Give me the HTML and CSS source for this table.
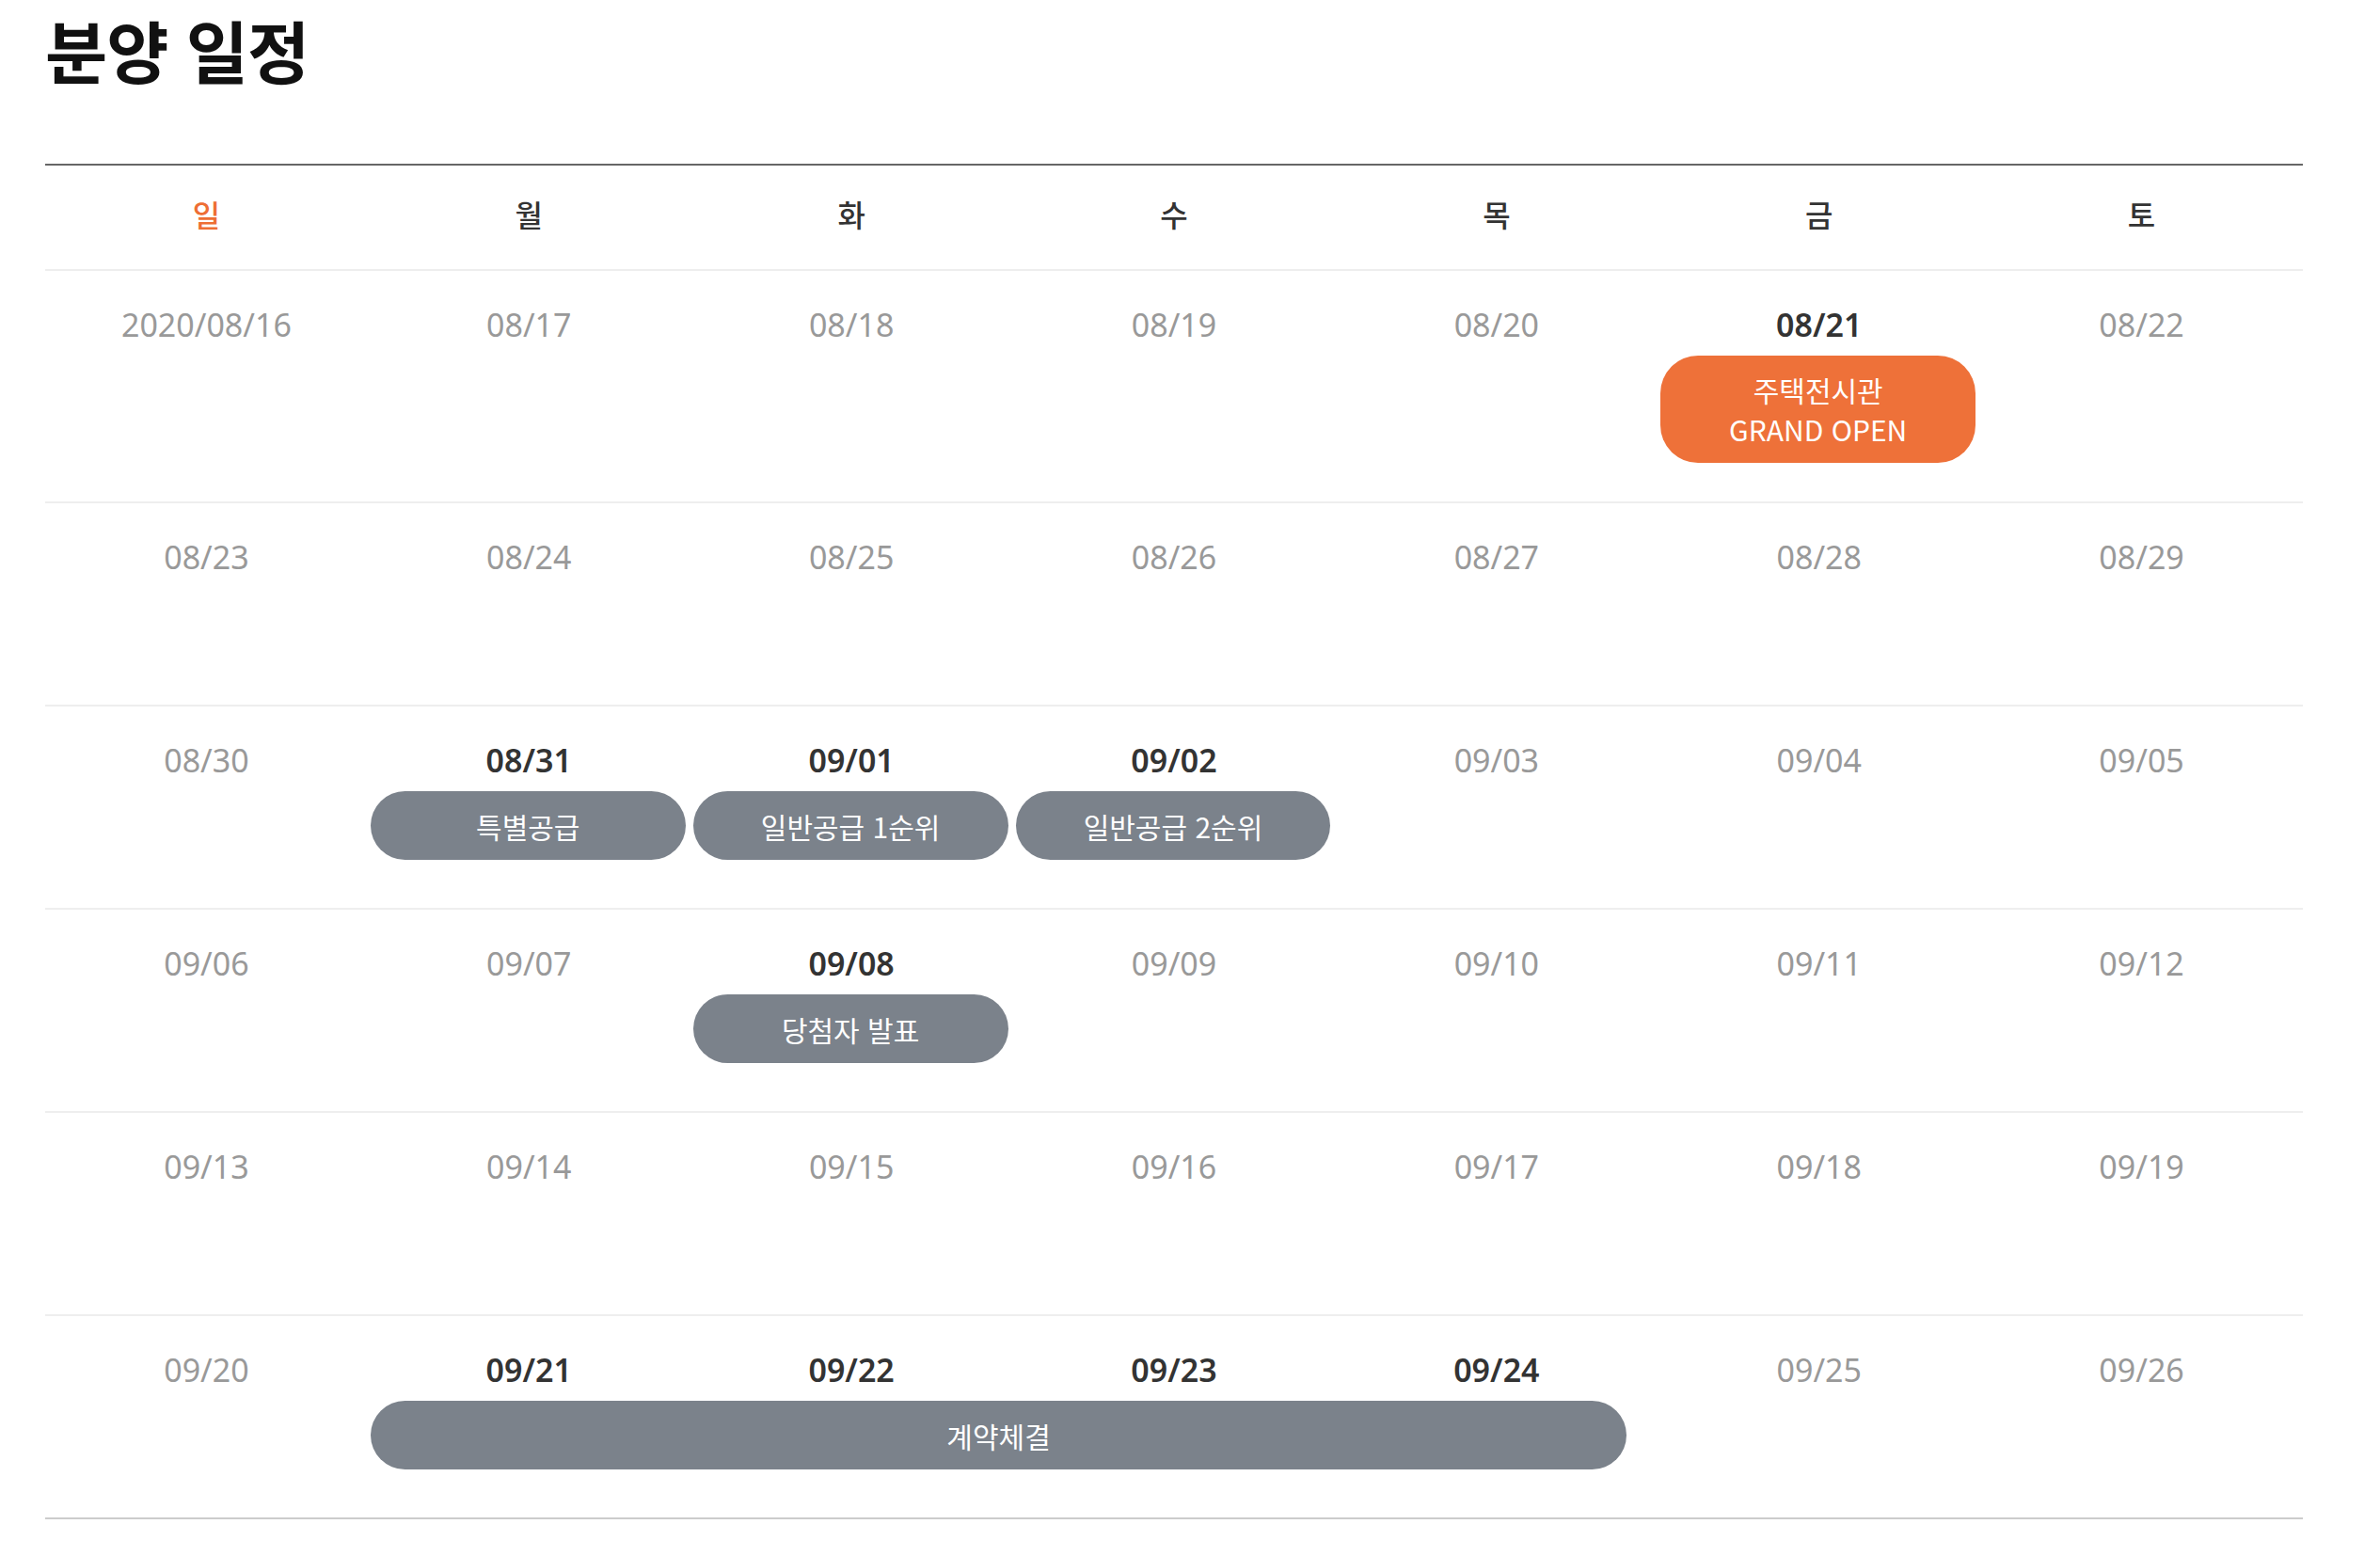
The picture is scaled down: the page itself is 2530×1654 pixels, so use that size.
FILE: index.html
```html
<!DOCTYPE html>
<html lang="ko">
<head>
<meta charset="utf-8">
<title>분양 일정</title>
<link rel="stylesheet" href="styles.css">
</head>
<body>
<main class="page">
  <h1 class="title">분양 일정</h1>
  <section class="calendar">
    <div class="week-head">
      <div class="dow sun">일</div>
      <div class="dow">월</div>
      <div class="dow">화</div>
      <div class="dow">수</div>
      <div class="dow">목</div>
      <div class="dow">금</div>
      <div class="dow">토</div>
    </div>

    <div class="week">
      <div class="date">2020/08/16</div>
      <div class="date">08/17</div>
      <div class="date">08/18</div>
      <div class="date">08/19</div>
      <div class="date">08/20</div>
      <div class="date on">08/21</div>
      <div class="date">08/22</div>
      <div class="event orange c6"><span>주택전시관</span><span>GRAND OPEN</span></div>
    </div>

    <div class="week">
      <div class="date">08/23</div>
      <div class="date">08/24</div>
      <div class="date">08/25</div>
      <div class="date">08/26</div>
      <div class="date">08/27</div>
      <div class="date">08/28</div>
      <div class="date">08/29</div>
    </div>

    <div class="week">
      <div class="date">08/30</div>
      <div class="date on">08/31</div>
      <div class="date on">09/01</div>
      <div class="date on">09/02</div>
      <div class="date">09/03</div>
      <div class="date">09/04</div>
      <div class="date">09/05</div>
      <div class="event c2">특별공급</div>
      <div class="event c3">일반공급 1순위</div>
      <div class="event c4">일반공급 2순위</div>
    </div>

    <div class="week">
      <div class="date">09/06</div>
      <div class="date">09/07</div>
      <div class="date on">09/08</div>
      <div class="date">09/09</div>
      <div class="date">09/10</div>
      <div class="date">09/11</div>
      <div class="date">09/12</div>
      <div class="event c3">당첨자 발표</div>
    </div>

    <div class="week">
      <div class="date">09/13</div>
      <div class="date">09/14</div>
      <div class="date">09/15</div>
      <div class="date">09/16</div>
      <div class="date">09/17</div>
      <div class="date">09/18</div>
      <div class="date">09/19</div>
    </div>

    <div class="week last">
      <div class="date">09/20</div>
      <div class="date on">09/21</div>
      <div class="date on">09/22</div>
      <div class="date on">09/23</div>
      <div class="date on">09/24</div>
      <div class="date">09/25</div>
      <div class="date">09/26</div>
      <div class="event c2 span4">계약체결</div>
    </div>
  </section>
</main>
</body>
</html>
```

FILE: styles.css
```css
html, body {
  margin: 0;
  padding: 0;
  background: #fff;
}

body {
  font-family: "Noto Sans CJK KR", "Noto Sans", sans-serif;
  color: #333;
}

.page {
  width: 2400px;
  margin-left: 48px;
}

.title {
  margin: 16px 0 0;
  font-size: 72px;
  line-height: 72px;
  font-weight: 700;
  color: #111;
  letter-spacing: -1px;
}

.calendar {
  margin-top: 86px;
  border-top: 2px solid #666;
}

.week-head {
  display: grid;
  grid-template-columns: repeat(7, 1fr);
  align-items: center;
  height: 112px;
  box-sizing: border-box;
  padding-bottom: 8px;
  border-bottom: 2px solid #eee;
}

.dow {
  text-align: center;
  font-size: 32px;
  font-weight: 500;
  color: #333;
}

.dow.sun {
  color: #ee6e34;
}

.week {
  display: grid;
  grid-template-columns: repeat(7, 1fr);
  grid-template-rows: auto auto;
  align-content: start;
  min-height: 216px;
  box-sizing: border-box;
  padding: 24px 0 41px;
  border-bottom: 2px solid #eee;
}

.week.last {
  border-bottom-color: #ccc;
}

.date {
  grid-row: 1;
  text-align: center;
  font-family: "Noto Sans", "Noto Sans CJK KR", sans-serif;
  font-size: 34px;
  line-height: 66px;
  color: #999;
}

.date.on {
  color: #333;
  font-weight: 600;
}

.event {
  grid-row: 2;
  display: flex;
  align-items: center;
  justify-content: center;
  height: 73px;
  margin: 0 5px 0 3px;
  border-radius: 37px;
  background: #7b828b;
  color: #fff;
  font-size: 30px;
}

.event.orange {
  flex-direction: column;
  height: 114px;
  border-radius: 40px;
  background: #ee7139;
  line-height: 42px;
}

.c2 { grid-column: 2; }
.c3 { grid-column: 3; }
.c4 { grid-column: 4; }
.c6 { grid-column: 6; }

.event.span4 {
  grid-column: 2 / span 4;
  margin-right: 33px;
}
```
